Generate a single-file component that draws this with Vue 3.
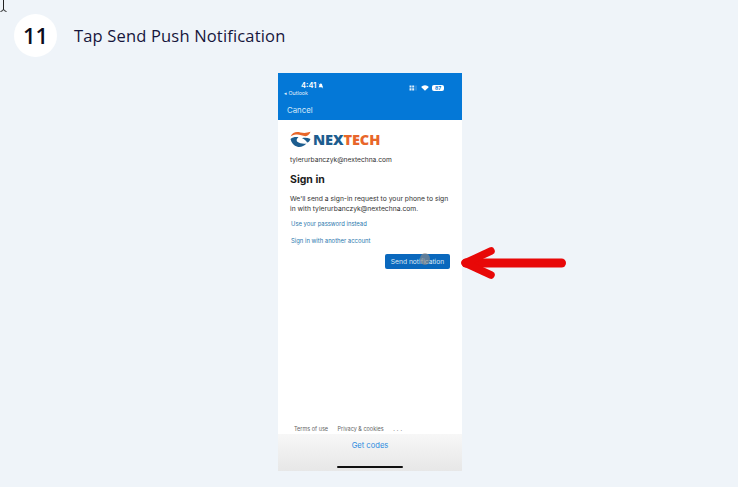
<script setup>
const title = 'Tap Send Push Notification'
</script>

<template>
  <div class="page">
    <svg class="cursor" width="8" height="12" viewBox="0 0 8 12">
      <path d="M3.5 -1V9M0.5 11.5Q3.5 11 3.5 9Q3.5 11 6.5 11.5" fill="none" stroke="#222" stroke-width="1" />
    </svg>
    <header class="head">
      <div class="num">11</div>
      <h1 class="title">{{ title }}</h1>
    </header>
    <div class="stage">
      <div class="phone">
        <div class="bar">
          <div class="status">
            <div class="time-col">
              <div class="time">4:41
                <svg width="6" height="6" viewBox="0 0 6 6"><path d="M3 0.4C1.7 0.4 1.5 1.6 1.4 2.8L0.6 4.4H5.4L4.6 2.8C4.5 1.6 4.3 0.4 3 0.4Z" fill="#fff" /><path d="M0.6 0.8L5.4 5.4" stroke="#fff" stroke-width="0.6" /></svg>
              </div>
              <div class="back">◂ Outlook</div>
            </div>
            <div class="sys">
              <svg width="9" height="6" viewBox="0 0 9 6"><path d="M0.5 3.2h2v2.4h-2zM3.2 3.2h2v2.4h-2zM3.2 0.6h2v2h-2zM0.5 0.6h2v2h-2z" fill="#dfeefb" /><path d="M6.6 0.4h0.8v5.2h-0.8z" fill="#5ea5e3" /></svg>
              <svg width="8" height="6" viewBox="0 0 8 6"><path d="M4 5.8 L0.1 1.9 A5.6 5.6 0 0 1 7.9 1.9 Z" fill="#fff" /></svg>
              <span class="batt">87</span>
            </div>
          </div>
          <div class="cancel">Cancel</div>
        </div>
        <main class="content">
          <div class="logo">
            <svg width="21" height="17" viewBox="0 0 21 17">
              <path d="M0.5 5.5C3 1 6 0.5 10.5 1.5C14 2.3 17 2 20.5 0.8C19.5 3.2 18 4.8 15.5 5.3C12 4.5 9 3.2 6 3.6C3.8 3.9 2 4.5 0.5 5.5Z" fill="#e8662a" />
              <path d="M0.5 8C3 6 6 5.6 8.5 6.3C6.8 7.4 6.2 9 7 10.6C9.8 12.4 13 13.2 16.5 12.6C14 15.2 10.5 16.6 7.5 15.8C3.8 14.8 1.4 11.8 0.5 8Z" fill="#1d5d8f" />
              <path d="M12 7.2C14.5 6.4 17.5 6.6 20.5 8C19.8 10 18.6 11.2 17 11.6C16.4 9.8 14.6 8.2 12 7.2Z" fill="#1d5d8f" />
            </svg>
            <div class="brand"><span class="nex">NEX</span><span class="tech">TECH</span></div>
          </div>
          <div class="email">tylerurbanczyk@nextechna.com</div>
          <h2 class="signin">Sign in</h2>
          <p class="desc">We'll send a sign-in request to your phone to sign in with tylerurbanczyk@nextechna.com.</p>
          <a class="link first">Use your password instead</a>
          <a class="link second">Sign in with another account</a>
          <div class="actions">
            <button class="send">Send notification<span class="touch"></span></button>
          </div>
          <footer class="terms">
            <span>Terms of use</span>
            <span>Privacy &amp; cookies</span>
            <span class="dots">. . .</span>
          </footer>
        </main>
        <div class="codes">
          <span class="codes-text">Get codes</span>
          <span class="home"></span>
        </div>
      </div>
    </div>
    <svg class="arrow" width="110" height="40" viewBox="0 0 110 40">
      <path d="M105.5 20H10" fill="none" stroke="#e80808" stroke-width="9" stroke-linecap="round" />
      <path d="M35 8L9 20L35 32" fill="none" stroke="#e80808" stroke-width="7.5" stroke-linecap="round" stroke-linejoin="round" />
    </svg>
  </div>
</template>

<style>
html, body { margin: 0; background: #eff4f9; }
</style>

<style scoped>
.page {
  position: relative;
  width: 738px;
  height: 487px;
  overflow: hidden;
  background: #eff4f9;
  font-family: Inter, "Liberation Sans", sans-serif;
}
.cursor { position: absolute; left: 0; top: 0; }
.head {
  display: flex;
  align-items: center;
  gap: 17px;
  padding: 14px 0 0 14px;
  height: 43px;
}
.num {
  width: 43px;
  height: 43px;
  border-radius: 50%;
  background: #fff;
  color: #0c0c1c;
  font: 600 22px/43px "Open Sans", sans-serif;
  text-align: center;
}
.title {
  margin: 0;
  padding-top: 2px;
  font: 400 16.5px/1 "Open Sans", sans-serif;
  color: #16163c;
  letter-spacing: 0.17px;
}
.stage {
  display: flex;
  justify-content: center;
  padding: 16px 0 0 2px;
}
.phone {
  width: 184px;
  height: 398px;
  display: flex;
  flex-direction: column;
  background: #fff;
}
.bar {
  height: 47px;
  background: #0478d7;
  color: #fff;
  box-sizing: border-box;
  padding: 8px 18px 0 6px;
}
.status { display: flex; justify-content: space-between; }
.time-col { width: 40px; }
.time {
  display: flex;
  align-items: center;
  gap: 2px;
  padding-left: 17px;
  font-size: 7.5px;
  line-height: 9px;
  font-weight: 600;
  white-space: nowrap;
}
.back { font-size: 5.3px; line-height: 6px; white-space: nowrap; color: #e4f1fb; }
.sys { display: flex; align-items: center; gap: 3px; height: 14px; }
.batt {
  width: 12px;
  height: 6px;
  background: #fff;
  border-radius: 2px;
  color: #0478d7;
  font-size: 5px;
  line-height: 6px;
  font-weight: 700;
  text-align: center;
}
.cancel { margin-top: 9px; padding-left: 3px; font-size: 7.8px; line-height: 10px; color: #d5e9f9; }
.content {
  flex: 1;
  display: flex;
  flex-direction: column;
  padding: 0 12px 0 12px;
  min-height: 0;
}
.logo {
  display: flex;
  align-items: center;
  gap: 2px;
  margin-top: 10px;
  height: 18px;
}
.brand { font: 800 14.6px/18px "Open Sans", sans-serif; letter-spacing: -0.1px; }
.nex { color: #1d5d8f; }
.tech { color: #e8662a; }
.email { margin-top: 8px; font-size: 6.65px; line-height: 9px; color: #333; }
.signin { margin: 8px 0 0; font-size: 10.5px; line-height: 13px; font-weight: 700; color: #1b1b1b; }
.desc { margin: 8px 0 0; font-size: 6.75px; line-height: 9.5px; color: #333; width: 162px; }
.link { display: block; padding-left: 1px; font-size: 5.9px; line-height: 8px; color: #2b78ae; }
.first { margin-top: 7px; }
.second { margin-top: 9px; }
.actions { display: flex; justify-content: flex-end; margin-top: 9px; }
.send {
  position: relative;
  width: 65px;
  height: 15px;
  padding: 1px 0 0;
  border: 0;
  border-radius: 2px;
  background: #0a68bd;
  color: #dce9f5;
  font: 6.7px/14px Inter, "Liberation Sans", sans-serif;
}
.touch {
  position: absolute;
  left: 35px;
  top: -1px;
  width: 10px;
  height: 12px;
  border-radius: 50%;
  background: rgba(150, 140, 130, 0.6);
}
.terms {
  margin-top: auto;
  display: flex;
  gap: 9.5px;
  padding: 0 0 1.5px 4px;
  font-size: 5.5px;
  line-height: 7px;
  color: #666;
}
.dots { letter-spacing: 0.3px; }
.codes {
  position: relative;
  height: 37px;
  text-align: center;
  background: linear-gradient(#f7f7f7, #e7e7e7);
}
.codes-text {
  display: block;
  padding-top: 7px;
  font-size: 7.6px;
  line-height: 10px;
  color: #2a8be0;
}
.home {
  position: absolute;
  left: 59px;
  bottom: 3px;
  width: 66px;
  height: 2px;
  border-radius: 1px;
  background: #111;
}
.arrow { position: absolute; left: 456px; top: 243px; }
</style>
